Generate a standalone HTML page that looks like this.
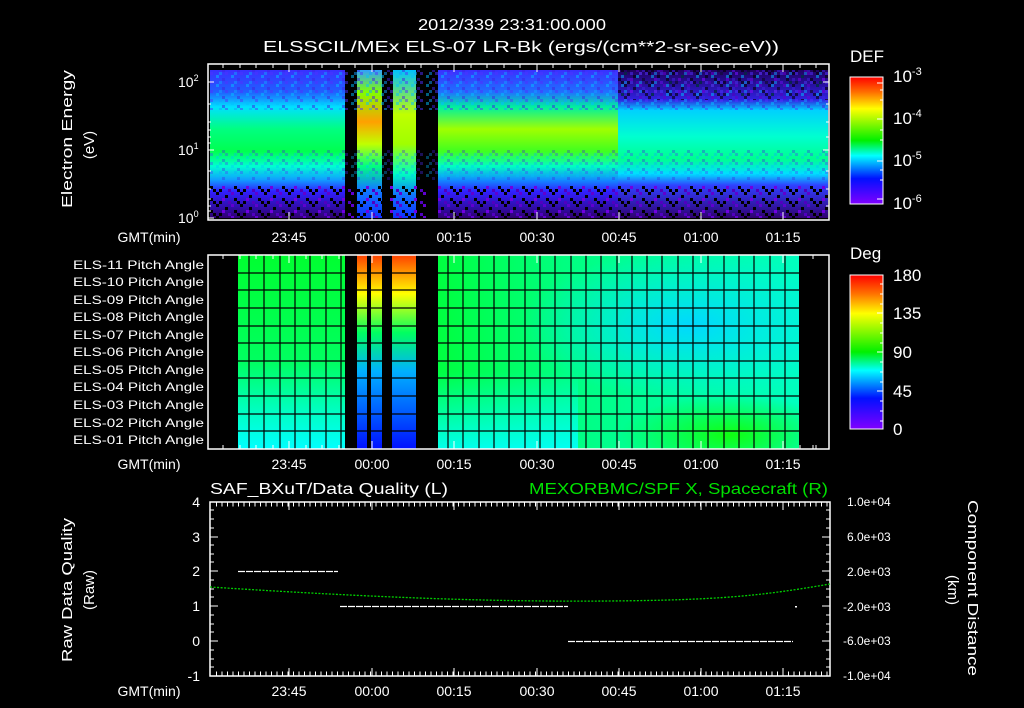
<!DOCTYPE html>
<html><head><meta charset="utf-8"><style>
html,body{margin:0;padding:0;background:#000;}
svg{display:block;}
text{font-family:"Liberation Sans",sans-serif;fill:#fff;}
</style></head><body>
<svg width="1024" height="708" viewBox="0 0 1024 708" xmlns="http://www.w3.org/2000/svg">
<defs>
<clipPath id="c2"><rect x="438" y="255" width="361" height="194"/></clipPath>
<linearGradient id="cb" x1="0" y1="0" x2="0" y2="1">
<stop offset="0" stop-color="#ff0000"/><stop offset="0.12" stop-color="#ff7000"/><stop offset="0.25" stop-color="#ffff00"/><stop offset="0.5" stop-color="#00f000"/><stop offset="0.62" stop-color="#00ffff"/><stop offset="0.8" stop-color="#0010ff"/><stop offset="1" stop-color="#8000ff"/>
</linearGradient>
<linearGradient id="sL" x1="0" y1="0" x2="0" y2="1">
<stop offset="0" stop-color="#3a30ff"/><stop offset="0.15" stop-color="#2060ff"/><stop offset="0.25" stop-color="#00e0ff"/><stop offset="0.4" stop-color="#00ff80"/><stop offset="0.55" stop-color="#00ff50"/><stop offset="0.65" stop-color="#00ffd0"/><stop offset="0.74" stop-color="#10a0ff"/><stop offset="0.82" stop-color="#3020ff"/><stop offset="1" stop-color="#300070"/>
</linearGradient>
<linearGradient id="sM" x1="0" y1="0" x2="0" y2="1">
<stop offset="0" stop-color="#3a30ff"/><stop offset="0.15" stop-color="#2070ff"/><stop offset="0.25" stop-color="#00f0a0"/><stop offset="0.4" stop-color="#a0ff00"/><stop offset="0.55" stop-color="#40ff20"/><stop offset="0.65" stop-color="#00ffc0"/><stop offset="0.74" stop-color="#1090ff"/><stop offset="0.82" stop-color="#3020ff"/><stop offset="1" stop-color="#300070"/>
</linearGradient>
<linearGradient id="sR" x1="0" y1="0" x2="0" y2="1">
<stop offset="0" stop-color="#200060"/><stop offset="0.2" stop-color="#3020e0"/><stop offset="0.27" stop-color="#00d0ff"/><stop offset="0.45" stop-color="#00ffd0"/><stop offset="0.6" stop-color="#00ff90"/><stop offset="0.7" stop-color="#00e0ff"/><stop offset="0.78" stop-color="#3040ff"/><stop offset="1" stop-color="#300070"/>
</linearGradient>
<linearGradient id="sHot" x1="0" y1="0" x2="0" y2="1">
<stop offset="0" stop-color="#30a0ff"/><stop offset="0.15" stop-color="#80ff00"/><stop offset="0.35" stop-color="#ffa000"/><stop offset="0.5" stop-color="#c0ff00"/><stop offset="0.65" stop-color="#00ff80"/><stop offset="0.8" stop-color="#1080ff"/><stop offset="1" stop-color="#1030ff"/>
</linearGradient>
<linearGradient id="sHot2" x1="0" y1="0" x2="0" y2="1">
<stop offset="0" stop-color="#00c0ff"/><stop offset="0.3" stop-color="#c0ff00"/><stop offset="0.5" stop-color="#a0ff00"/><stop offset="0.7" stop-color="#00ffc0"/><stop offset="0.85" stop-color="#1070ff"/><stop offset="1" stop-color="#1030ff"/>
</linearGradient>
<pattern id="noise" width="24" height="12" patternUnits="userSpaceOnUse">
<rect x="0" y="0" width="3" height="3" fill="#000"/><rect x="9" y="3" width="3" height="3" fill="#000"/><rect x="15" y="0" width="3" height="3" fill="#6000d0"/><rect x="18" y="6" width="3" height="3" fill="#000"/><rect x="3" y="9" width="3" height="3" fill="#000"/><rect x="12" y="9" width="3" height="3" fill="#5000c0"/><rect x="6" y="6" width="3" height="3" fill="#7000e0"/><rect x="21" y="9" width="3" height="3" fill="#000"/>
</pattern>
<pattern id="noise2" width="15" height="9" patternUnits="userSpaceOnUse">
<rect x="0" y="0" width="3" height="3" fill="#5030ff"/><rect x="6" y="3" width="3" height="3" fill="#00c0ff"/><rect x="12" y="6" width="3" height="3" fill="#4020e0"/><rect x="9" y="0" width="3" height="3" fill="#10a0ff"/>
</pattern>
<linearGradient id="pL" x1="0" y1="0" x2="0" y2="1">
<stop offset="0" stop-color="#00ff30"/><stop offset="0.55" stop-color="#00ff60"/><stop offset="0.8" stop-color="#00ffc0"/><stop offset="1" stop-color="#00ffff"/>
</linearGradient>
<linearGradient id="pR" x1="0" y1="0" x2="1" y2="0">
<stop offset="0" stop-color="#00ff40"/><stop offset="0.35" stop-color="#00ff80"/><stop offset="1" stop-color="#00ffc0"/>
</linearGradient>
<linearGradient id="pRv" x1="0" y1="0" x2="0" y2="1">
<stop offset="0" stop-color="#00ffff" stop-opacity="0"/><stop offset="0.6" stop-color="#00ffff" stop-opacity="0"/><stop offset="1" stop-color="#00ffff" stop-opacity="0.9"/>
</linearGradient>
<radialGradient id="blob" cx="0.5" cy="0.5" r="0.5"><stop offset="0" stop-color="#00d8ff"/><stop offset="1" stop-color="#00e8ff" stop-opacity="0"/></radialGradient>
<radialGradient id="gblob" cx="0.5" cy="0.5" r="0.5"><stop offset="0" stop-color="#10ff10"/><stop offset="1" stop-color="#10ff10" stop-opacity="0"/></radialGradient>
<linearGradient id="st" x1="0" y1="0" x2="0" y2="1">
<stop offset="0" stop-color="#ff4000"/><stop offset="0.2" stop-color="#ffff00"/><stop offset="0.4" stop-color="#00ff60"/><stop offset="0.6" stop-color="#00b0ff"/><stop offset="1" stop-color="#0010ff"/>
</linearGradient>
</defs>

<text x="418" y="30" font-size="16" textLength="188" lengthAdjust="spacingAndGlyphs">2012/339 23:31:00.000</text>
<text x="263" y="52" font-size="16" textLength="516" lengthAdjust="spacingAndGlyphs">ELSSCIL/MEx ELS-07 LR-Bk  (ergs/(cm**2-sr-sec-eV))</text>

<!-- Panel 1 -->
<rect x="210" y="70" width="135" height="148" fill="url(#sL)"/>
<rect x="357" y="70" width="25" height="148" fill="url(#sHot)"/>
<rect x="393" y="70" width="23" height="148" fill="url(#sHot2)"/>
<rect x="438" y="70" width="180" height="148" fill="url(#sM)"/>
<rect x="618" y="70" width="210" height="148" fill="url(#sR)"/>
<rect x="210" y="70" width="618" height="40" fill="url(#noise2)" opacity="0.5"/>
<rect x="210" y="150" width="618" height="30" fill="url(#noise2)" opacity="0.35"/>
<rect x="210" y="186" width="618" height="32" fill="url(#noise)"/>
<rect x="618" y="70" width="210" height="30" fill="url(#noise)" opacity="0.6"/>
<rect x="208" y="64" width="621" height="156" fill="none" stroke="#fff" stroke-width="1.5"/>
<g stroke="#fff" stroke-width="1">
<path d="M289 64v8M372 64v8M454 64v8M537 64v8M619 64v8M701 64v8M783 64v8M289 220v-8M372 220v-8M454 220v-8M537 220v-8M619 220v-8M701 220v-8M783 220v-8"/>
<path d="M223 64v4M240 64v4M256 64v4M273 64v4M306 64v4M322 64v4M339 64v4M355 64v4M388 64v4M405 64v4M421 64v4M438 64v4M471 64v4M487 64v4M504 64v4M520 64v4M553 64v4M570 64v4M586 64v4M603 64v4M636 64v4M652 64v4M669 64v4M685 64v4M718 64v4M734 64v4M751 64v4M767 64v4M800 64v4M816 64v4"/>
<path d="M208 82h6M208 150h6M208 218h6M208 104h3M208 122h3M208 130h3M208 137h3M208 143h3M208 171h3M208 189h3M208 199h3M208 206h3M208 211h3M829 82h-6M829 150h-6M829 104h-3M829 122h-3M829 137h-3M829 171h-3M829 189h-3M829 206h-3"/>
</g>
<text x="178" y="87" font-size="14">10<tspan font-size="9" dy="-6">2</tspan></text>
<text x="178" y="155" font-size="14">10<tspan font-size="9" dy="-6">1</tspan></text>
<text x="178" y="223" font-size="14">10<tspan font-size="9" dy="-6">0</tspan></text>
<text transform="translate(72,208) rotate(-90)" font-size="15" textLength="138" lengthAdjust="spacingAndGlyphs">Electron Energy</text>
<text transform="translate(94,145) rotate(-90)" font-size="15" text-anchor="middle">(eV)</text>
<g font-size="14" text-anchor="middle">
<text x="149" y="242">GMT(min)</text>
<text x="289" y="242">23:45</text><text x="372" y="242">00:00</text><text x="454" y="242">00:15</text><text x="537" y="242">00:30</text><text x="619" y="242">00:45</text><text x="701" y="242">01:00</text><text x="783" y="242">01:15</text>
</g>
<rect x="850" y="77" width="33" height="127" fill="url(#cb)" stroke="#fff" stroke-width="1"/>
<g stroke="#fff"><path d="M883 83h-6M883 119h-6M883 161h-6M883 199h-6M883 90h-3M883 100h-3M883 130h-3M883 140h-3M883 170h-3M883 180h-3"/></g>
<text x="850" y="62" font-size="17">DEF</text>
<g font-size="17"><text x="893" y="82">10<tspan font-size="11" dy="-7">-3</tspan></text><text x="893" y="124">10<tspan font-size="11" dy="-7">-4</tspan></text><text x="893" y="166">10<tspan font-size="11" dy="-7">-5</tspan></text><text x="893" y="209">10<tspan font-size="11" dy="-7">-6</tspan></text></g>

<!-- Panel 2 -->
<rect x="238" y="255" width="107" height="194" fill="url(#pL)"/>
<g clip-path="url(#c2)">
<rect x="438" y="255" width="361" height="194" fill="url(#pR)"/>
<rect x="438" y="255" width="140" height="194" fill="url(#pRv)"/>
<ellipse cx="690" cy="325" rx="170" ry="75" fill="url(#blob)"/>
<ellipse cx="730" cy="435" rx="110" ry="40" fill="url(#gblob)"/>
</g>
<rect x="357" y="255" width="10" height="194" fill="url(#st)"/>
<rect x="371" y="255" width="11" height="194" fill="url(#st)"/>
<rect x="392" y="255" width="24" height="194" fill="url(#st)"/>
<rect x="367" y="255" width="4" height="194" fill="#000"/>
<g stroke="#000" stroke-width="1.2">
<path d="M238 273h561M238 290h561M238 308h561M238 326h561M238 343h561M238 361h561M238 378h561M238 396h561M238 414h561M238 431h561"/>
<path d="M249 255v194M264 255v194M280 255v194M295 255v194M310 255v194M326 255v194M341 255v194M448 255v194M463 255v194M479 255v194M494 255v194M509 255v194M525 255v194M540 255v194M555 255v194M571 255v194M586 255v194M601 255v194M617 255v194M632 255v194M647 255v194M662 255v194M678 255v194M693 255v194M708 255v194M724 255v194M739 255v194M754 255v194M770 255v194M785 255v194"/>
</g>
<rect x="345" y="255" width="12" height="194" fill="#000"/>
<rect x="382" y="255" width="10" height="194" fill="#000"/>
<rect x="416" y="255" width="22" height="194" fill="#000"/>
<rect x="208" y="255" width="621" height="194" fill="none" stroke="#fff" stroke-width="1.5"/>
<g stroke="#fff"><path d="M289 255v8M372 255v8M454 255v8M537 255v8M619 255v8M701 255v8M783 255v8M289 449v-8M372 449v-8M454 449v-8M537 449v-8M619 449v-8M701 449v-8M783 449v-8M223 255v4M240 255v4M256 255v4M273 255v4M306 255v4M322 255v4M339 255v4M813 255v4M223 449v-4M240 449v-4M256 449v-4M273 449v-4M306 449v-4M322 449v-4M339 449v-4M813 449v-4M800 449v-4M816 449v-4"/></g>
<g font-size="12">
<text x="73" y="269" textLength="131" lengthAdjust="spacingAndGlyphs">ELS-11 Pitch Angle</text><text x="73" y="286" textLength="131" lengthAdjust="spacingAndGlyphs">ELS-10 Pitch Angle</text><text x="73" y="304" textLength="131" lengthAdjust="spacingAndGlyphs">ELS-09 Pitch Angle</text><text x="73" y="321" textLength="131" lengthAdjust="spacingAndGlyphs">ELS-08 Pitch Angle</text><text x="73" y="339" textLength="131" lengthAdjust="spacingAndGlyphs">ELS-07 Pitch Angle</text><text x="73" y="356" textLength="131" lengthAdjust="spacingAndGlyphs">ELS-06 Pitch Angle</text><text x="73" y="374" textLength="131" lengthAdjust="spacingAndGlyphs">ELS-05 Pitch Angle</text><text x="73" y="391" textLength="131" lengthAdjust="spacingAndGlyphs">ELS-04 Pitch Angle</text><text x="73" y="409" textLength="131" lengthAdjust="spacingAndGlyphs">ELS-03 Pitch Angle</text><text x="73" y="427" textLength="131" lengthAdjust="spacingAndGlyphs">ELS-02 Pitch Angle</text><text x="73" y="444" textLength="131" lengthAdjust="spacingAndGlyphs">ELS-01 Pitch Angle</text>
</g>
<g font-size="14" text-anchor="middle">
<text x="149" y="469">GMT(min)</text>
<text x="289" y="469">23:45</text><text x="372" y="469">00:00</text><text x="454" y="469">00:15</text><text x="537" y="469">00:30</text><text x="619" y="469">00:45</text><text x="701" y="469">01:00</text><text x="783" y="469">01:15</text>
</g>
<rect x="850" y="275" width="33" height="154" fill="url(#cb)" stroke="#fff" stroke-width="1"/>
<g stroke="#fff"><path d="M883 313h-6M883 352h-6M883 391h-6M883 284h-3M883 294h-3M883 304h-3M883 323h-3M883 333h-3M883 343h-3M883 362h-3M883 372h-3M883 382h-3M883 401h-3M883 411h-3M883 421h-3"/></g>
<text x="850" y="259" font-size="17">Deg</text>
<g font-size="17"><text x="893" y="281">180</text><text x="893" y="319">135</text><text x="893" y="358">90</text><text x="893" y="397">45</text><text x="893" y="435">0</text></g>

<!-- Panel 3 -->
<text x="210" y="494" font-size="16" textLength="238" lengthAdjust="spacingAndGlyphs">SAF_BXuT/Data Quality (L)</text>
<text x="529" y="494" font-size="16" style="fill:#00e000" textLength="299" lengthAdjust="spacingAndGlyphs">MEXORBMC/SPF X, Spacecraft (R)</text>
<rect x="210" y="502" width="620" height="174" fill="none" stroke="#fff" stroke-width="1.5"/>
<g stroke="#fff"><path d="M210 502h8M210 537h8M210 571h8M210 606h8M210 641h8M830 502h-8M830 537h-8M830 571h-8M830 606h-8M830 641h-8M289 502v8M372 502v8M454 502v8M537 502v8M619 502v8M701 502v8M783 502v8M289 676v-8M372 676v-8M454 676v-8M537 676v-8M619 676v-8M701 676v-8M783 676v-8"/>
<path d="M210 510h4M210 519h4M210 528h4M210 545h4M210 554h4M210 562h4M210 580h4M210 589h4M210 597h4M210 615h4M210 624h4M210 632h4M210 650h4M210 659h4M210 667h4"/>
<path d="M830 510h-4M830 519h-4M830 528h-4M830 545h-4M830 554h-4M830 562h-4M830 580h-4M830 589h-4M830 597h-4M830 615h-4M830 624h-4M830 632h-4M830 650h-4M830 659h-4M830 667h-4"/></g>
<path d="M216 504h612M216 674h612" stroke="#fff" stroke-width="5" stroke-dasharray="1 4.5"/>
<path d="M210 587 C 380 598, 500 602, 610 601 S 760 596 830 584" fill="none" stroke="#00d000" stroke-width="1.3" stroke-dasharray="2 1.5"/>
<g stroke="#fff" stroke-width="1.2" stroke-dasharray="7 1">
<path d="M238 571.5h100"/><path d="M340 606.5h228"/><path d="M568 641.5h225"/></g>
<rect x="795" y="606" width="2" height="1.5" fill="#fff"/>
<g font-size="14" text-anchor="end"><text x="200" y="507">4</text><text x="200" y="542">3</text><text x="200" y="576">2</text><text x="200" y="611">1</text><text x="200" y="646">0</text><text x="200" y="681">-1</text></g>
<g font-size="12"><text x="847" y="506">1.0e+04</text><text x="847" y="541">6.0e+03</text><text x="847" y="576">2.0e+03</text><text x="843" y="611">-2.0e+03</text><text x="843" y="645">-6.0e+03</text><text x="843" y="680">-1.0e+04</text></g>
<text transform="translate(72,662) rotate(-90)" font-size="15" textLength="144" lengthAdjust="spacingAndGlyphs">Raw Data Quality</text>
<text transform="translate(94,590) rotate(-90)" font-size="15" text-anchor="middle">(Raw)</text>
<text transform="translate(968,500) rotate(90)" font-size="15" textLength="176" lengthAdjust="spacingAndGlyphs">Component Distance</text>
<text transform="translate(948,590) rotate(90)" font-size="15" text-anchor="middle">(km)</text>
<g font-size="14" text-anchor="middle">
<text x="149" y="696">GMT(min)</text>
<text x="289" y="696">23:45</text><text x="372" y="696">00:00</text><text x="454" y="696">00:15</text><text x="537" y="696">00:30</text><text x="619" y="696">00:45</text><text x="701" y="696">01:00</text><text x="783" y="696">01:15</text>
</g>
</svg>
</body></html>
